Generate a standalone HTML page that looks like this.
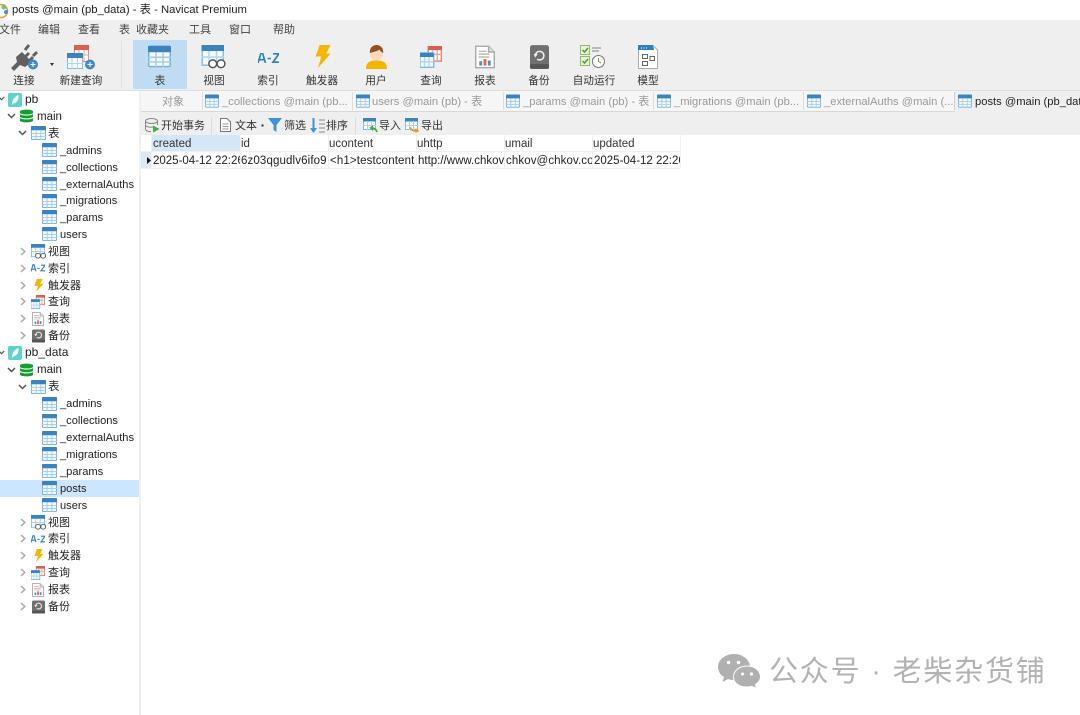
<!DOCTYPE html>
<html lang="zh">
<head>
<meta charset="utf-8">
<title>posts @main (pb_data) - 表 - Navicat Premium</title>
<style>
html,body{margin:0;padding:0;background:#fff}
body{width:1080px;height:715px;position:relative;overflow:hidden;font-family:"Liberation Sans","Noto Sans CJK SC",sans-serif;font-size:11.5px;color:#333;filter:blur(.35px)}
div,span,svg{position:absolute}
span{white-space:nowrap;line-height:16px}
svg{overflow:visible}
.m{top:22px;font-size:11px;color:#444}
.t{top:73px;width:60px;text-align:center;font-size:10.7px;color:#333}
.n{left:0;font-size:11.1px;color:#222}
.tab{top:94px;font-size:11.2px;color:#999}
.sep{top:92px;width:1px;height:18px;background:#ddd}
.b{top:118px;font-size:11px;color:#333}
.h{top:136px;font-size:11.5px;color:#333}
.c{top:153px;font-size:11.5px;color:#222;overflow:hidden;height:16px}
.vl{top:135px;width:1px;height:33px;background:#f0f0f0}
</style>
</head>
<body>
<svg width="0" height="0" style="left:0;top:0">
<defs>
<symbol id="tb" viewBox="0 0 16 15">
<rect x=".5" y=".5" width="15" height="14" rx="1" fill="#f4f9fd" stroke="#6daee0"/>
<rect x="0" y="0" width="16" height="4.5" rx="1" fill="#3b83c0"/>
<path d="M0 8H16M0 11.300H16M5.500 4.500V15M10.500 4.500V15" stroke="#a0cbec" stroke-width="1" fill="none"/>
</symbol>
<symbol id="vw" viewBox="0 0 16 16">
<rect x=".5" y=".5" width="14" height="13" fill="#f4f9fd" stroke="#8cbde4"/>
<rect x="0" y="0" width="15" height="4" fill="#3b83c0"/>
<path d="M5 4V13M10 4V13M0 8H15" stroke="#b0d4ef"/>
<circle cx="7.500" cy="12.500" r="2.600" fill="#fff" stroke="#555"/>
<circle cx="13" cy="12.500" r="2.600" fill="#fff" stroke="#555"/>
</symbol>
<symbol id="bolt" viewBox="0 0 16 16">
<path d="M6 0H13L10 6H14L5 16L7.500 8.500H3Z" fill="#f7b500"/>
</symbol>
<symbol id="qr" viewBox="0 0 16 16">
<rect x="6" y=".5" width="9.500" height="10.500" fill="#fff" stroke="#e57f6a"/>
<rect x="6" y="0" width="10" height="3" fill="#d9604a"/>
<path d="M9 3V11M12.500 3V11M6 6H16" stroke="#eca595"/>
<rect x="0" y="5" width="10" height="10.500" fill="#f4f9fd" stroke="#7db8e6"/>
<rect x="0" y="5" width="10" height="3" fill="#3b83c0"/>
<path d="M3.300 8V15M6.600 8V15M0 11.500H10" stroke="#b0d4ef"/>
</symbol>
<symbol id="rp" viewBox="0 0 14 16">
<path d="M.5 .5H9.500L13.500 4.500V15.500H.5Z" fill="#fff" stroke="#aaa"/>
<path d="M9.500 .5V4.500H13.500" fill="#ddd" stroke="#aaa"/>
<path d="M2.500 4H8M2.500 6H10M2.500 8H10" stroke="#bbb"/>
<rect x="3" y="11" width="2" height="3" fill="#4a90d0"/>
<rect x="6" y="9.500" width="2" height="4.500" fill="#e8663c"/>
<rect x="9" y="10.500" width="2" height="3.500" fill="#4a90d0"/>
</symbol>
<symbol id="bk" viewBox="0 0 16 16">
<rect x="0" y="0" width="16" height="16" rx="2" fill="#707070"/>
<rect x="0" y="12.500" width="16" height="3.500" rx="1" fill="#555"/>
<path d="M4.500 7A3.600 3.600 0 1 1 6 9.800" fill="none" stroke="#eee" stroke-width="1.300"/>
<path d="M3 5.500H6.500L4.500 8.500Z" fill="#eee"/>
</symbol>
<symbol id="az" viewBox="0 0 21 10">
<path d="M0 10L3 0H4.500L7.500 10M1.300 6.700H6.200M15 .8H21L15 9.200H21" fill="none" stroke="#2f7fbd" stroke-width="1.700"/>
<path d="M9.500 5.500H13" stroke="#2f7fbd" stroke-width="1.500"/>
</symbol>
<symbol id="db" viewBox="0 0 13 14">
<path d="M0 2.500C0 0 13 0 13 2.500V11.500C13 14 0 14 0 11.500Z" fill="#12a02c"/>
<path d="M0 4.500C2 6.500 11 6.500 13 4.500M0 8.300C2 10.300 11 10.300 13 8.300" stroke="#e6f7e6" stroke-width="1.200" fill="none"/>
</symbol>
<symbol id="sl" viewBox="0 0 14 14">
<rect width="14" height="14" rx="2" fill="#5bd3cf"/>
<path d="M4 12C4 7 6.500 3.500 10.500 2C11 6 9.500 9.500 5.500 10.500Z" fill="#fff"/>
</symbol>
<symbol id="dn" viewBox="0 0 9 6"><path d="M1 1L4.500 4.500L8 1" fill="none" stroke="#555" stroke-width="1.500"/></symbol>
<symbol id="rt" viewBox="0 0 6 9"><path d="M1 1L4.800 4.500L1 8" fill="none" stroke="#aaa" stroke-width="1.500"/></symbol>
</defs>
</svg>

<!-- title bar -->
<svg style="left:-7px;top:2px" width="16" height="16" viewBox="0 0 16 16"><circle cx="8" cy="9" r="6.500" fill="#fff" stroke="#e09a3a" stroke-width="1.500"/><circle cx="11" cy="5" r="2.500" fill="#7cc06a"/><circle cx="13" cy="10" r="2" fill="#4a90d0"/></svg>
<span style="left:12px;top:2px;font-size:11.300px;color:#222">posts @main (pb_data) - 表 - Navicat Premium</span>

<!-- menu + toolbar background -->
<div style="left:0;top:20px;width:1080px;height:70px;background:#efefef"></div>
<div style="left:0;top:90px;width:1080px;height:1px;background:#dedede"></div>
<span class="m" style="left:-1px">文件</span>
<span class="m" style="left:38px">编辑</span>
<span class="m" style="left:78px">查看</span>
<span class="m" style="left:119px">表</span>
<span class="m" style="left:136px">收藏夹</span>
<span class="m" style="left:189px">工具</span>
<span class="m" style="left:229px">窗口</span>
<span class="m" style="left:273px">帮助</span>

<div style="left:121px;top:41px;width:1px;height:48px;background:#e2e2e2"></div>
<div style="left:133px;top:40px;width:54px;height:49px;background:#bfdcf2"></div>

<!-- connect -->
<svg style="left:11px;top:45px" width="28" height="26" viewBox="0 0 28 26">
<path d="M0 23L6 17L5 12L11 7L14 10L17 7L19 9L16 12L18 14L21 11L23 13L20 16L21 17L14 22L9 20L3 26Z" fill="#606060"/>
<path d="M14 5L18 0M22 11L26 7" stroke="#606060" stroke-width="3"/>
<circle cx="22" cy="19.500" r="5" fill="#3f8bc8"/>
<path d="M19.500 19.500H24.500M22 17V22" stroke="#fff"/>
</svg>
<span class="t" style="left:-6px">连接</span>
<svg style="left:50px;top:63px" width="4" height="3"><path d="M0 0H4L2 3Z" fill="#333"/></svg>
<!-- new query -->
<svg style="left:67px;top:45px" width="29" height="27" viewBox="0 0 29 27">
<rect x="7.500" y=".5" width="14" height="16" fill="#fff" stroke="#e88f7c"/>
<rect x="7" y="0" width="15" height="5" fill="#d9604a"/>
<path d="M12 5V16M17 5V16M7 10H22" stroke="#eca595"/>
<rect x=".5" y="8.500" width="15" height="15" fill="#f4f9fd" stroke="#7db8e6"/>
<rect x="0" y="8" width="16" height="5" fill="#3b83c0"/>
<path d="M5 13V24M10.500 13V24M0 18.500H16" stroke="#b0d4ef"/>
<circle cx="23" cy="19.500" r="5" fill="#3f8bc8"/>
<path d="M20.500 19.500H25.500M23 17V22" stroke="#fff"/>
</svg>
<span class="t" style="left:51px">新建查询</span>
<!-- table -->
<svg style="left:148px;top:45px" width="23" height="23"><use href="#tb" width="23" height="23"/></svg>
<span class="t" style="left:130px">表</span>
<!-- view -->
<svg style="left:201px;top:45px" width="26" height="24"><use href="#vw" width="25" height="24"/></svg>
<span class="t" style="left:184px">视图</span>
<!-- index -->
<svg style="left:258px;top:53px" width="21" height="10"><use href="#az" width="21" height="10"/></svg>
<span class="t" style="left:238px">索引</span>
<!-- trigger -->
<svg style="left:313px;top:45px" width="19" height="23" viewBox="0 0 16 20"><path d="M5.500 0H15L11 7.500H15L4 20L7 10H2Z" fill="#f7b500"/></svg>
<span class="t" style="left:292px">触发器</span>
<!-- user -->
<svg style="left:365px;top:45px" width="23" height="24" viewBox="0 0 23 24">
<path d="M1 24C1 17 5 15.500 11.500 15.500S22 17 22 24Z" fill="#f5b400"/>
<circle cx="11.500" cy="9" r="6.500" fill="#fbd9c0"/>
<path d="M4.800 8C4.500 2.500 8 0 11.500 0S18.500 2.500 18.200 8C16 7 15 5.500 14.500 4.500C12 6.500 8 7 4.800 8Z" fill="#9a4f1e"/>
</svg>
<span class="t" style="left:346px">用户</span>
<!-- query -->
<svg style="left:420px;top:45px" width="22" height="24"><use href="#qr" width="22" height="24"/></svg>
<span class="t" style="left:401px">查询</span>
<!-- report -->
<svg style="left:475px;top:45px" width="20" height="24"><use href="#rp" width="20" height="24"/></svg>
<span class="t" style="left:455px">报表</span>
<!-- backup -->
<svg style="left:530px;top:45px" width="19" height="24" viewBox="0 0 16 20">
<rect width="16" height="20" rx="2" fill="#707070"/><rect y="16" width="16" height="4" rx="1" fill="#555"/>
<path d="M4.500 9A3.600 3.600 0 1 1 6 11.800" fill="none" stroke="#eee" stroke-width="1.300"/><path d="M3 7.500H6.500L4.500 10.500Z" fill="#eee"/>
</svg>
<span class="t" style="left:509px">备份</span>
<!-- automation -->
<svg style="left:580px;top:45px" width="26" height="24" viewBox="0 0 26 24">
<rect x=".5" y=".5" width="9" height="9" fill="#e6f2dc" stroke="#8fba6e"/>
<path d="M2.500 5L4.500 7L8 3" stroke="#4d9a2e" stroke-width="1.500" fill="none"/>
<rect x=".5" y="11.500" width="9" height="9" fill="#e6f2dc" stroke="#8fba6e"/>
<path d="M2.500 16L4.500 18L8 14" stroke="#4d9a2e" stroke-width="1.500" fill="none"/>
<path d="M12 3H21M12 6H19M12 14H15" stroke="#999" stroke-width="1.200"/>
<circle cx="18.500" cy="16.500" r="6" fill="#fff" stroke="#777"/>
<path d="M18.500 13V16.500L21 18" stroke="#d9604a" fill="none"/>
</svg>
<span class="t" style="left:564px">自动运行</span>
<!-- model -->
<svg style="left:638px;top:45px" width="20" height="24" viewBox="0 0 20 24">
<path d="M.5 .5H15L19.500 5V23.500H.5Z" fill="#fff" stroke="#aaa"/>
<path d="M0 0H15L16 5H0Z" fill="#2f7fbd"/>
<path d="M3 3H4M5.500 3H6.500M8 3H9" stroke="#fff"/>
<rect x="4.500" y="9.500" width="5" height="4" fill="#fff" stroke="#666"/>
<rect x="12" y="11.500" width="4.500" height="4" fill="#fff" stroke="#666"/>
<rect x="4.500" y="16.500" width="5" height="4" fill="#fff" stroke="#666"/>
</svg>
<span class="t" style="left:618px">模型</span>

<!-- sidebar separator -->
<div style="left:139px;top:91px;width:2px;height:624px;background:#f0f0f0"></div>

<!-- tab bar -->
<div style="left:141px;top:91px;width:939px;height:20px;background:#f6f6f6"></div>
<div style="left:141px;top:111px;width:939px;height:1px;background:#d8d8d8"></div>
<div style="left:141px;top:112px;width:939px;height:23px;background:#efefef"></div>
<div style="left:955px;top:91px;width:125px;height:21px;background:#efefef"></div>
<span class="tab" style="left:162px;font-size:11px">对象</span>
<div class="sep" style="left:202px"></div>
<svg style="left:205px;top:94px" width="14" height="14"><use href="#tb" width="14" height="14"/></svg>
<span class="tab" style="left:222px">_collections @main (pb...</span>
<div class="sep" style="left:352px"></div>
<svg style="left:356px;top:94px" width="14" height="14"><use href="#tb" width="14" height="14"/></svg>
<span class="tab" style="left:372px">users @main (pb) - 表</span>
<div class="sep" style="left:503px"></div>
<svg style="left:506px;top:94px" width="14" height="14"><use href="#tb" width="14" height="14"/></svg>
<span class="tab" style="left:523px">_params @main (pb) - 表</span>
<div class="sep" style="left:653px"></div>
<svg style="left:657px;top:94px" width="14" height="14"><use href="#tb" width="14" height="14"/></svg>
<span class="tab" style="left:674px">_migrations @main (pb...</span>
<div class="sep" style="left:803px"></div>
<svg style="left:807px;top:94px" width="14" height="14"><use href="#tb" width="14" height="14"/></svg>
<span class="tab" style="left:824px">_externalAuths @main (...</span>
<div class="sep" style="left:954px;background:#d0d0d0"></div>
<svg style="left:958px;top:94px" width="14" height="14"><use href="#tb" width="14" height="14"/></svg>
<span class="tab" style="left:975px;color:#222">posts @main (pb_data</span>

<!-- object toolbar -->
<svg style="left:145px;top:118px" width="15" height="15" viewBox="0 0 15 15">
<ellipse cx="6.500" cy="3" rx="6" ry="2.500" fill="#eee" stroke="#888"/>
<path d="M.5 3V11C.5 13 4 13.800 6 13.800M12.500 3V7M.5 7C1 9 5 9.500 8 9" fill="none" stroke="#888"/>
<path d="M8 7.500L14.500 11L8 14.500Z" fill="#3fae3a"/>
</svg>
<span class="b" style="left:161px">开始事务</span>
<div style="left:211px;top:117px;width:1px;height:18px;background:#dcdcdc"></div>
<svg style="left:220px;top:118px" width="11" height="14" viewBox="0 0 11 14"><path d="M.5 .5H7L10.500 4V13.500H.5Z" fill="#fff" stroke="#777"/><path d="M2.500 6H8.500M2.500 8.500H8.500M2.500 11H8.500" stroke="#999"/></svg>
<span class="b" style="left:235px">文本</span>
<svg style="left:261px;top:124px" width="3" height="3"><circle cx="1.500" cy="1.500" r="1.200" fill="#444"/></svg>
<svg style="left:268px;top:118px" width="14" height="14" viewBox="0 0 14 14"><path d="M0 0H14L8.500 7V14L5.500 12V7Z" fill="#3e93d6"/></svg>
<span class="b" style="left:284px">筛选</span>
<svg style="left:310px;top:118px" width="15" height="15" viewBox="0 0 15 15"><path d="M3.500 0V12" stroke="#3e93d6" stroke-width="2"/><path d="M0 10H7L3.500 15Z" fill="#3e93d6"/><path d="M9 2H15M9 6H15M9 10H15M9 14H15" stroke="#888"/></svg>
<span class="b" style="left:326px">排序</span>
<div style="left:355px;top:117px;width:1px;height:18px;background:#dcdcdc"></div>
<svg style="left:363px;top:118px" width="15" height="15" viewBox="0 0 15 15"><rect x=".5" y=".5" width="12" height="11" fill="#fff" stroke="#7db8e6"/><rect width="13" height="3.500" fill="#3b83c0"/><path d="M4.500 3V12M8.500 3V12M0 7.500H13" stroke="#b0d4ef"/><path d="M14 14C13 10.500 10.500 10 8.500 10" fill="none" stroke="#3fae3a" stroke-width="1.800"/><path d="M10 7L6.500 10L10 13Z" fill="#3fae3a"/></svg>
<span class="b" style="left:379px">导入</span>
<svg style="left:405px;top:118px" width="15" height="15" viewBox="0 0 15 15"><rect x=".5" y=".5" width="12" height="11" fill="#fff" stroke="#7db8e6"/><rect width="13" height="3.500" fill="#3b83c0"/><path d="M4.500 3V12M8.500 3V12M0 7.500H13" stroke="#b0d4ef"/><path d="M5 9C6 12.500 8.500 13 11 13" fill="none" stroke="#f09a1a" stroke-width="1.800"/><path d="M10.500 10L14.500 13L10.500 15Z" fill="#f09a1a"/></svg>
<span class="b" style="left:421px">导出</span>

<!-- grid -->
<div style="left:152px;top:135px;width:88px;height:16px;background:#d4e7f7"></div>
<div style="left:141px;top:152px;width:11px;height:17px;background:#dbe9f6"></div>
<div style="left:141px;top:151px;width:540px;height:1px;background:#f0f0f0"></div>
<div style="left:141px;top:168px;width:540px;height:1px;background:#f0f0f0"></div>
<div class="vl" style="left:151px"></div>
<div class="vl" style="left:240px"></div>
<div class="vl" style="left:328px"></div>
<div class="vl" style="left:416px"></div>
<div class="vl" style="left:504px"></div>
<div class="vl" style="left:592px"></div>
<div class="vl" style="left:680px"></div>
<svg style="left:147px;top:157px" width="4" height="7"><path d="M0 0L4 3.500L0 7Z" fill="#111"/></svg>
<span class="h" style="left:153px">created</span>
<span class="h" style="left:241px">id</span>
<span class="h" style="left:329px">ucontent</span>
<span class="h" style="left:417px">uhttp</span>
<span class="h" style="left:505px">umail</span>
<span class="h" style="left:593px">updated</span>
<span class="c" style="left:153px;width:87px">2025-04-12 22:26:00</span>
<span class="c" style="left:241px;width:87px;letter-spacing:.13px">6z03qgudlv6ifo9</span>
<span class="c" style="left:330px;width:86px;letter-spacing:.13px">&lt;h1&gt;testcontent</span>
<span class="c" style="left:418px;width:86px">http://www.chkov.com</span>
<span class="c" style="left:506px;width:86px;letter-spacing:.1px">chkov@chkov.com</span>
<span class="c" style="left:594px;width:86px">2025-04-12 22:26:00</span>

<!-- tree -->
<div style="left:0;top:480px;width:139px;height:17px;background:#cce6ff"></div>

<svg style="left:-2px;top:96px" width="7" height="5"><use href="#dn" width="7" height="5"/></svg>
<svg style="left:8px;top:93px" width="14" height="14"><use href="#sl" width="14" height="14"/></svg>
<span class="n" style="left:25px;top:91px;font-size:12px">pb</span>
<svg style="left:7px;top:113px" width="9" height="6"><use href="#dn" width="9" height="6"/></svg>
<svg style="left:20px;top:109px" width="13" height="14"><use href="#db" width="13" height="14"/></svg>
<span class="n" style="left:37px;top:109px;font-size:11.500px">main</span>
<svg style="left:18px;top:130px" width="9" height="6"><use href="#dn" width="9" height="6"/></svg>
<svg style="left:31px;top:126px" width="15" height="14"><use href="#tb" width="15" height="14"/></svg>
<span class="n" style="left:48px;top:126px;font-size:11.500px">表</span>
<svg style="left:42px;top:143px" width="15" height="14"><use href="#tb" width="15" height="14"/></svg>
<span class="n" style="left:60px;top:143px">_admins</span>
<svg style="left:42px;top:160px" width="15" height="14"><use href="#tb" width="15" height="14"/></svg>
<span class="n" style="left:60px;top:160px">_collections</span>
<svg style="left:42px;top:177px" width="15" height="14"><use href="#tb" width="15" height="14"/></svg>
<span class="n" style="left:60px;top:177px">_externalAuths</span>
<svg style="left:42px;top:194px" width="15" height="14"><use href="#tb" width="15" height="14"/></svg>
<span class="n" style="left:60px;top:193px">_migrations</span>
<svg style="left:42px;top:210px" width="15" height="14"><use href="#tb" width="15" height="14"/></svg>
<span class="n" style="left:60px;top:210px">_params</span>
<svg style="left:42px;top:227px" width="15" height="14"><use href="#tb" width="15" height="14"/></svg>
<span class="n" style="left:60px;top:227px">users</span>

<svg style="left:20px;top:247px" width="6" height="9"><use href="#rt" width="6" height="9"/></svg>
<svg style="left:31px;top:244px" width="15" height="15"><use href="#vw" width="15" height="15"/></svg>
<span class="n" style="left:48px;top:244px;font-size:11px">视图</span>
<svg style="left:20px;top:264px" width="6" height="9"><use href="#rt" width="6" height="9"/></svg>
<svg style="left:31px;top:264px" width="14" height="8"><use href="#az" width="14" height="8"/></svg>
<span class="n" style="left:48px;top:261px;font-size:11px">索引</span>
<svg style="left:20px;top:281px" width="6" height="9"><use href="#rt" width="6" height="9"/></svg>
<svg style="left:32px;top:278px" width="13" height="15"><use href="#bolt" width="13" height="15"/></svg>
<span class="n" style="left:48px;top:278px;font-size:11px">触发器</span>
<svg style="left:20px;top:297px" width="6" height="9"><use href="#rt" width="6" height="9"/></svg>
<svg style="left:31px;top:295px" width="14" height="14"><use href="#qr" width="14" height="14"/></svg>
<span class="n" style="left:48px;top:294px;font-size:11px">查询</span>
<svg style="left:20px;top:314px" width="6" height="9"><use href="#rt" width="6" height="9"/></svg>
<svg style="left:32px;top:312px" width="12" height="14"><use href="#rp" width="12" height="14"/></svg>
<span class="n" style="left:48px;top:311px;font-size:11px">报表</span>
<svg style="left:20px;top:331px" width="6" height="9"><use href="#rt" width="6" height="9"/></svg>
<svg style="left:32px;top:329px" width="13" height="14"><use href="#bk" width="13" height="14"/></svg>
<span class="n" style="left:48px;top:328px;font-size:11px">备份</span>

<svg style="left:-2px;top:350px" width="7" height="5"><use href="#dn" width="7" height="5"/></svg>
<svg style="left:8px;top:346px" width="14" height="14"><use href="#sl" width="14" height="14"/></svg>
<span class="n" style="left:25px;top:344px;font-size:12px">pb_data</span>
<svg style="left:7px;top:367px" width="9" height="6"><use href="#dn" width="9" height="6"/></svg>
<svg style="left:20px;top:363px" width="13" height="14"><use href="#db" width="13" height="14"/></svg>
<span class="n" style="left:37px;top:362px;font-size:11.500px">main</span>
<svg style="left:18px;top:384px" width="9" height="6"><use href="#dn" width="9" height="6"/></svg>
<svg style="left:31px;top:380px" width="15" height="14"><use href="#tb" width="15" height="14"/></svg>
<span class="n" style="left:48px;top:379px;font-size:11.500px">表</span>
<svg style="left:42px;top:397px" width="15" height="14"><use href="#tb" width="15" height="14"/></svg>
<span class="n" style="left:60px;top:396px">_admins</span>
<svg style="left:42px;top:414px" width="15" height="14"><use href="#tb" width="15" height="14"/></svg>
<span class="n" style="left:60px;top:413px">_collections</span>
<svg style="left:42px;top:431px" width="15" height="14"><use href="#tb" width="15" height="14"/></svg>
<span class="n" style="left:60px;top:430px">_externalAuths</span>
<svg style="left:42px;top:447px" width="15" height="14"><use href="#tb" width="15" height="14"/></svg>
<span class="n" style="left:60px;top:447px">_migrations</span>
<svg style="left:42px;top:464px" width="15" height="14"><use href="#tb" width="15" height="14"/></svg>
<span class="n" style="left:60px;top:464px">_params</span>
<svg style="left:42px;top:481px" width="15" height="14"><use href="#tb" width="15" height="14"/></svg>
<span class="n" style="left:60px;top:481px">posts</span>
<svg style="left:42px;top:498px" width="15" height="14"><use href="#tb" width="15" height="14"/></svg>
<span class="n" style="left:60px;top:498px">users</span>

<svg style="left:20px;top:518px" width="6" height="9"><use href="#rt" width="6" height="9"/></svg>
<svg style="left:31px;top:515px" width="15" height="15"><use href="#vw" width="15" height="15"/></svg>
<span class="n" style="left:48px;top:515px;font-size:11px">视图</span>
<svg style="left:20px;top:534px" width="6" height="9"><use href="#rt" width="6" height="9"/></svg>
<svg style="left:31px;top:535px" width="14" height="8"><use href="#az" width="14" height="8"/></svg>
<span class="n" style="left:48px;top:531px;font-size:11px">索引</span>
<svg style="left:20px;top:551px" width="6" height="9"><use href="#rt" width="6" height="9"/></svg>
<svg style="left:32px;top:548px" width="13" height="15"><use href="#bolt" width="13" height="15"/></svg>
<span class="n" style="left:48px;top:548px;font-size:11px">触发器</span>
<svg style="left:20px;top:568px" width="6" height="9"><use href="#rt" width="6" height="9"/></svg>
<svg style="left:31px;top:566px" width="14" height="14"><use href="#qr" width="14" height="14"/></svg>
<span class="n" style="left:48px;top:565px;font-size:11px">查询</span>
<svg style="left:20px;top:585px" width="6" height="9"><use href="#rt" width="6" height="9"/></svg>
<svg style="left:32px;top:583px" width="12" height="14"><use href="#rp" width="12" height="14"/></svg>
<span class="n" style="left:48px;top:582px;font-size:11px">报表</span>
<svg style="left:20px;top:602px" width="6" height="9"><use href="#rt" width="6" height="9"/></svg>
<svg style="left:32px;top:600px" width="13" height="14"><use href="#bk" width="13" height="14"/></svg>
<span class="n" style="left:48px;top:599px;font-size:11px">备份</span>

<!-- watermark -->
<svg style="left:718px;top:653px" width="43" height="36" viewBox="0 0 43 36">
<path d="M16 1C7 1 0 7 0 14C0 18 2 21.500 6 24L4.500 29L10 26C12 26.700 14 27 16 27C25 27 32 21 32 14S25 1 16 1Z" fill="#b0b0b0"/>
<path d="M29 13C21 13 15.500 18 15.500 24S21 34 29 34C30.500 34 32 33.800 33.500 33.300L38.500 35.500L37.500 31.500C40.500 29.500 42.500 27 42.500 24C42.500 18 37 13 29 13Z" fill="#b0b0b0" stroke="#fff" stroke-width="1"/>
<circle cx="10.500" cy="9.500" r="1.800" fill="#fff"/><circle cx="20.500" cy="9.500" r="1.800" fill="#fff"/>
<circle cx="24.500" cy="21" r="1.600" fill="#fff"/><circle cx="33.500" cy="21" r="1.600" fill="#fff"/>
</svg>
<span style="left:769px;top:655px;font-size:29px;line-height:34px;color:#b3b3b3;letter-spacing:1.800px">公众号 · 老柴杂货铺</span>
</body>
</html>
